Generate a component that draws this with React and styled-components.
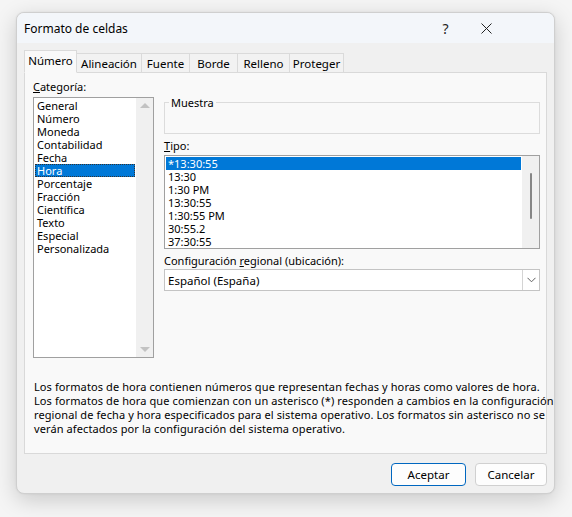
import React from "react";
import styled, { createGlobalStyle } from "styled-components";

const GlobalStyle = createGlobalStyle`
  * { box-sizing: border-box; }
  html, body { margin: 0; padding: 0; }
  body {
    background: #f5f5f5;
    font-family: "Noto Sans", "Open Sans", sans-serif;
    font-size: 11px;
    color: #000;
  }
`;

const categories = [
  "General",
  "Número",
  "Moneda",
  "Contabilidad",
  "Fecha",
  "Hora",
  "Porcentaje",
  "Fracción",
  "Científica",
  "Texto",
  "Especial",
  "Personalizada",
];

const types = [
  "*13:30:55",
  "13:30",
  "1:30 PM",
  "13:30:55",
  "1:30:55 PM",
  "30:55.2",
  "37:30:55",
];

const tabs = [
  { label: "Número", width: 53 },
  { label: "Alineación", width: 66 },
  { label: "Fuente", width: 49 },
  { label: "Borde", width: 49 },
  { label: "Relleno", width: 53 },
  { label: "Proteger", width: 55 },
];

const Page = styled.div`
  width: 572px;
  height: 517px;
  padding: 12px 0 0 16px;
`;

const Window = styled.div`
  width: 539px;
  height: 482px;
  display: flex;
  flex-direction: column;
  background: #f0f0f0;
  border: 1px solid #cfcfcf;
  border-radius: 8px;
  overflow: hidden;
  box-shadow: 0 6px 22px rgba(0, 0, 0, 0.18), 0 0 2px rgba(0, 0, 0, 0.08);
`;

const TitleBar = styled.div`
  height: 30px;
  display: flex;
  align-items: center;
  padding: 0 47px 0 7px;
  background: #f3f6fa;
  font-size: 12px;
`;

const Title = styled.div`
  flex: 1;
`;

const TitleButton = styled.div`
  width: 41px;
  height: 30px;
  display: flex;
  align-items: center;
  justify-content: center;
  font-size: 14px;
  color: #222;
`;

const Body = styled.div`
  flex: 1;
  display: flex;
  flex-direction: column;
  padding: 8px 7px 0 7px;
`;

const TabRow = styled.div`
  display: flex;
  align-items: flex-end;
  height: 22px;
  margin-bottom: -1px;
  position: relative;
  z-index: 1;
`;

const Tab = styled.div`
  width: ${({ $w }) => $w}px;
  height: ${({ $active }) => ($active ? 23 : 20)}px;
  display: flex;
  align-items: center;
  justify-content: center;
  padding-bottom: ${({ $active }) => ($active ? 2 : 0)}px;
  background: ${({ $active }) => ($active ? "#f9f9f9" : "#f2f2f2")};
  border: 1px solid #dadada;
  border-bottom: ${({ $active }) => ($active ? "1px solid #f9f9f9" : "1px solid #dadada")};
  margin-left: ${({ $active }) => ($active ? 0 : -1)}px;
  font-size: 11.5px;
  ${({ $active }) => ($active ? "z-index: 2;" : "")}
`;

const Panel = styled.div`
  height: 382px;
  background: #f9f9f9;
  border: 1px solid #d9d9d9;
  padding: 7px 7px 0 8px;
  display: flex;
  flex-direction: column;
`;

const Columns = styled.div`
  display: grid;
  grid-template-columns: 121px 376px;
  column-gap: 10px;
`;

const Column = styled.div`
  display: flex;
  flex-direction: column;
`;

const Label = styled.div`
  line-height: 13px;
  height: 13px;
  margin-top: ${({ $mt }) => $mt || 0}px;
  margin-bottom: ${({ $mb }) => $mb || 0}px;
  white-space: nowrap;
`;

const ListBox = styled.div`
  height: ${({ $h }) => $h}px;
  background: #fff;
  border: 1px solid #a0a0a0;
  display: flex;
`;

const ListItems = styled.div`
  flex: 1;
  padding: 1px 1px 0 1px;
`;

const Item = styled.div`
  height: 13px;
  line-height: 13px;
  padding-left: 2px;
  white-space: nowrap;
  background: ${({ $selected }) => ($selected ? "#0078d7" : "transparent")};
  color: ${({ $selected }) => ($selected ? "#fff" : "#000")};
  outline: ${({ $focus }) => ($focus ? "1px dotted #333" : "none")};
  outline-offset: -1px;
`;

const ScrollTrack = styled.div`
  width: 17px;
  background: #f0f0f0;
  display: flex;
  flex-direction: column;
  justify-content: ${({ $thin }) => ($thin ? "flex-start" : "space-between")};
  align-items: center;
  padding: ${({ $thin }) => ($thin ? "17px 0 0" : "5px 0")};
`;

const Arrow = styled.div`
  width: 0;
  height: 0;
  border-left: 5px solid transparent;
  border-right: 5px solid transparent;
  ${({ $down }) =>
    $down ? "border-top: 5px solid #c2c2c2;" : "border-bottom: 5px solid #c2c2c2;"}
`;

const Thumb = styled.div`
  width: 2px;
  height: 46px;
  border-radius: 1px;
  background: #868686;
`;

const GroupBox = styled.fieldset`
  margin: 16px 0 0 0;
  padding: 0 0 0 4px;
  height: 38px;
  border: 1px solid #dcdcdc;
  min-width: 0;

  legend {
    padding: 0 2px;
    line-height: 13px;
  }
`;

const Combo = styled.div`
  height: 22px;
  display: flex;
  align-items: stretch;
  background: #fff;
  border: 1px solid #c4c4c4;
`;

const ComboText = styled.div`
  flex: 1;
  display: flex;
  align-items: center;
  padding-left: 3px;
  font-size: 11.5px;
`;

const ComboButton = styled.div`
  width: 17px;
  border-left: 1px solid #d4d4d4;
  display: flex;
  align-items: center;
  justify-content: center;
`;

const Description = styled.p`
  margin: 22px 0 0 1px;
  line-height: 14px;
  letter-spacing: 0.1px;
  white-space: nowrap;
`;

const Footer = styled.div`
  flex: 1;
  display: flex;
  justify-content: flex-end;
  align-items: flex-start;
  gap: 9px;
  padding: 9px 0 0 0;
`;

const Button = styled.button`
  width: ${({ $w }) => $w}px;
  height: 23px;
  font-family: inherit;
  font-size: 11.5px;
  color: #000;
  background: #fdfdfd;
  border: 1px solid ${({ $primary }) => ($primary ? "#0067c0" : "#d0d0d0")};
  border-radius: 4px;
  padding: 0;
`;

const Chevron = () => (
  <svg width="9" height="6" viewBox="0 0 9 6">
    <path d="M0.5 0.8 L4.5 4.8 L8.5 0.8" fill="none" stroke="#606060" strokeWidth="1" />
  </svg>
);

const CloseIcon = () => (
  <svg width="11" height="11" viewBox="0 0 11 11">
    <path d="M0.5 0.5 L10.5 10.5 M10.5 0.5 L0.5 10.5" stroke="#222" strokeWidth="1" />
  </svg>
);

export default function App() {
  return (
    <Page>
      <GlobalStyle />
      <Window>
        <TitleBar>
          <Title>Formato de celdas</Title>
          <TitleButton>?</TitleButton>
          <TitleButton>
            <CloseIcon />
          </TitleButton>
        </TitleBar>
        <Body>
          <TabRow>
            {tabs.map((t, i) => (
              <Tab key={t.label} $w={t.width} $active={i === 0}>
                {t.label}
              </Tab>
            ))}
          </TabRow>
          <Panel>
            <Columns>
              <Column>
                <Label $mb={4}>
                  <u>C</u>ategoría:
                </Label>
                <ListBox $h={261}>
                  <ListItems>
                    {categories.map((c) => (
                      <Item key={c} $selected={c === "Hora"} $focus={c === "Hora"}>
                        {c}
                      </Item>
                    ))}
                  </ListItems>
                  <ScrollTrack>
                    <Arrow />
                    <Arrow $down />
                  </ScrollTrack>
                </ListBox>
              </Column>
              <Column>
                <GroupBox>
                  <legend>Muestra</legend>
                </GroupBox>
                <Label $mt={5} $mb={3}>
                  <u>T</u>ipo:
                </Label>
                <ListBox $h={94}>
                  <ListItems>
                    {types.map((t, i) => (
                      <Item key={i} $selected={i === 0}>
                        {t}
                      </Item>
                    ))}
                  </ListItems>
                  <ScrollTrack $thin>
                    <Thumb />
                  </ScrollTrack>
                </ListBox>
                <Label $mt={5} $mb={2}>
                  Configuración <u>r</u>egional (ubicación):
                </Label>
                <Combo>
                  <ComboText>Español (España)</ComboText>
                  <ComboButton>
                    <Chevron />
                  </ComboButton>
                </Combo>
              </Column>
            </Columns>
            <Description>
              Los formatos de hora contienen números que representan fechas y horas como valores de hora.
              <br />
              Los formatos de hora que comienzan con un asterisco (*) responden a cambios en la configuración
              <br />
              regional de fecha y hora especificados para el sistema operativo. Los formatos sin asterisco no se
              <br />
              verán afectados por la configuración del sistema operativo.
            </Description>
          </Panel>
          <Footer>
            <Button $w={75} $primary>
              Aceptar
            </Button>
            <Button $w={72}>Cancelar</Button>
          </Footer>
        </Body>
      </Window>
    </Page>
  );
}
